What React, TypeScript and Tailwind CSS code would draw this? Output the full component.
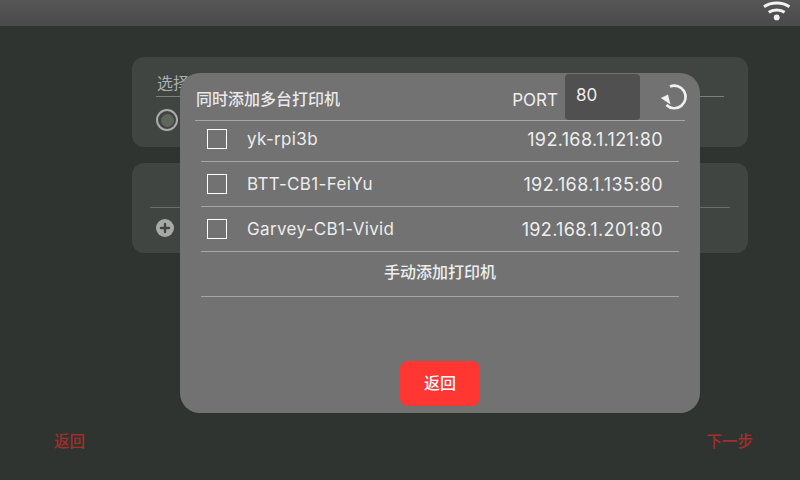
import { Plus } from 'lucide-react';

const FONT = "font-['Inter','Noto_Sans_CJK_SC',sans-serif]";

const PRINTERS = [
  { name: 'yk-rpi3b', addr: '192.168.1.121:80' },
  { name: 'BTT-CB1-FeiYu', addr: '192.168.1.135:80' },
  { name: 'Garvey-CB1-Vivid', addr: '192.168.1.201:80' },
];

function Wifi() {
  return (
    <svg width="28" height="22" viewBox="0 0 28 22" fill="none" stroke="#f2f2f2" strokeWidth="3">
      <path d="M1 6.8C8.2 1.8 19.2 1.8 26.4 6.8" />
      <path d="M5.8 12.3C10.2 9.2 17.2 9.2 21.6 12.3" />
      <circle cx="13.7" cy="17.4" r="2.9" fill="#f2f2f2" stroke="none" />
    </svg>
  );
}

function Refresh() {
  return (
    <svg width="28" height="28" viewBox="0 0 28 28" fill="none">
      <path d="M10 3.5A11.3 11.3 0 1 1 6.4 22" stroke="#f0f0f0" strokeWidth="2.6" />
      <path d="M0.8 15L8 11.5L10.5 21.5Z" fill="#f0f0f0" />
    </svg>
  );
}

export default function App() {
  return (
    <div className={`relative w-[800px] h-[480px] overflow-hidden bg-[#2f3430] ${FONT}`}>
      <div className="h-[26px] bg-gradient-to-b from-[#565656] to-[#4a4a4a] flex justify-end pr-[9px]">
        <Wifi />
      </div>

      <div className="ml-[132px] w-[616px] mt-[31px] flex flex-col gap-4">
        <div className="h-[90px] rounded-xl bg-[#414542] px-6 pt-[15px]">
          <div className="border-b border-[#7c7f7c] h-[25px] pl-[1px] text-base leading-[22px] text-[#aeb0ae]">选择</div>
          <div className="mt-[12px] w-[22px] h-[22px] rounded-full border-2 border-[#a9aca6] flex items-center justify-center">
            <div className="w-[13px] h-[13px] rounded-full bg-[#5e665e]" />
          </div>
        </div>
        <div className="h-[90px] rounded-xl bg-[#414542] px-[18px] pt-[44px]">
          <div className="border-b border-[#6b6e6b]" />
          <div className="mt-[11px] ml-[6px] w-[18px] h-[18px] rounded-full bg-[#a8aaa8] flex items-center justify-center">
            <Plus size={14} strokeWidth={4} color="#414542" />
          </div>
        </div>
      </div>

      <div className="flex justify-between mt-[177px] pl-[54px] pr-[47px] text-[15.5px] font-medium leading-6 text-[#a32e2c]">
        <span>返回</span>
        <span>下一步</span>
      </div>

      {/* dialog */}
      <div className="absolute left-[180px] top-[73px] w-[520px] h-[340px] rounded-[20px] bg-[#727272] flex flex-col text-[#eeeeee]">
        <div className="h-12 mx-[15px] pl-[1px] border-b border-[#a5a5a5] flex items-center">
          <span className="text-base font-medium flex-1 text-[#e8e8e8] pt-[5px]">同时添加多台打印机</span>
          <span className="text-[17px] pt-[8px] mr-[7px]">PORT</span>
          <div className="w-[75px] h-[46px] self-start mt-[1px] rounded bg-[#505050] pl-[11px] pt-[9px] leading-6 text-[17px]">80</div>
          <div className="ml-[20px] -mr-[3px] self-start mt-[10px]">
            <Refresh />
          </div>
        </div>
        <div className="mx-[21px]">
          {PRINTERS.map((p) => (
            <div key={p.name} className="h-[45px] first:h-[41px] first:pb-[4px] border-b border-[#a5a5a5] flex items-center pl-[6px] pr-[16px]">
              <div className="w-5 h-5 border border-white" />
              <span className="ml-[20px] flex-1 pt-[1px] text-[17px] tracking-[0.35px] text-[#ececec]">{p.name}</span>
              <span className="pt-[1px] text-lg tracking-[0.35px] text-[#eeeeee]">{p.addr}</span>
            </div>
          ))}
          <div className="h-[45px] pb-[4px] border-b border-[#a5a5a5] flex items-center justify-center text-base font-medium text-[#eeeeee]">
            手动添加打印机
          </div>
        </div>
        <button className="w-20 h-[45px] mx-auto mt-[64px] pb-[2px] rounded-lg bg-[#ff3631] text-base font-medium text-white">返回</button>
      </div>
    </div>
  );
}
